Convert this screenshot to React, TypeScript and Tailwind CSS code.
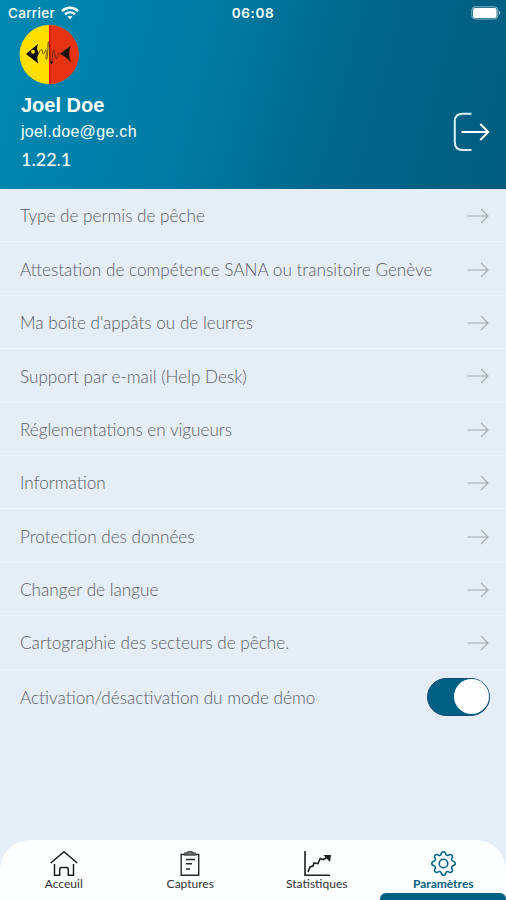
import React from "react";
import { BsGear } from "react-icons/bs";

const settings = [
  { label: "Type de permis de pêche" },
  { label: "Attestation de compétence SANA ou transitoire Genève" },
  { label: "Ma boîte d'appâts ou de leurres" },
  { label: "Support par e-mail (Help Desk)" },
  { label: "Réglementations en vigueurs" },
  { label: "Information" },
  { label: "Protection des données" },
  { label: "Changer de langue" },
  { label: "Cartographie des secteurs de pêche." },
];

const WifiIcon = () => (
  <svg width="18" height="14" viewBox="0 0 18 14" fill="none">
    <path d="M1 5.1C5.5 .7 12.5 .7 17 5.1" stroke="white" strokeWidth="2.5" />
    <path d="M4 8.3c2.9-2.7 7.1-2.7 10 0" stroke="white" strokeWidth="2.3" />
    <path d="M6.6 10.8c1.4-1.3 3.4-1.3 4.8 0L9 13.3z" fill="white" />
  </svg>
);

const BatteryIcon = () => (
  <svg width="31" height="14" viewBox="0 0 31 14" fill="none">
    <rect x=".8" y=".8" width="26" height="12.2" rx="3.4" stroke="#8fb8c9" strokeWidth="1" />
    <rect x="2" y="2" width="23.6" height="10" rx="2" fill="white" />
    <path d="M28 4.8c2 .8 2 3.4 0 4.2z" fill="#8fb8c9" />
  </svg>
);

const FishLogo = () => (
  <svg width="60" height="60" viewBox="0 0 60 60" fill="none">
    <circle cx="30" cy="29.5" r="29.4" fill="#ffdf00" />
    <path d="M30.5.1a29.4 29.4 0 0 1 0 58.8z" fill="#e63312" />
    <path d="M30.7.2v58.6" stroke="#e20613" strokeWidth="1.5" />
    <path d="M7 29 19 19c-1.3 4-1.1 6 .8 9-1.8 3.5-1.8 6-.5 10.5z" fill="#080808" />
    <circle cx="14" cy="26.7" r="2" fill="#ffdf00" />
    <path
      d="M18 30c2-.3 2.4-4.5 4-5.5 1.8-.3 1.2 3.8 2.2 4.5 1.5.2 1.7-4.7 3-3.5.8 1.8-1 8.4.3 9 1.7-.6 1-18.8 2-17.7 1.5 2.2.6 20.8 2.7 21.7 1.5-.5.7-11.6 2.3-13.5 1.5-.2 1.3 9.5 2.7 9 1.4-.8 1.4-5.9 3.2-6.3 1.1.3 1.3 2 2.6 2.3"
      stroke="#4a2a10"
      strokeWidth=".75"
    />
    <path d="M30.8 36.5h3.2l-1.5 3z" fill="#17130d" />
    <path d="m41 28.8 11-8c-2.5 5-2.4 10.5.3 16.7l-5.9-5.6z" fill="#17130d" />
  </svg>
);

const LogoutIcon = () => (
  <svg width="38" height="42" viewBox="0 0 38 42" fill="none" stroke="white" strokeWidth="2">
    <path d="M19.5 2.8h-9Q2.8 2.8 2.8 10.5V31q0 8 7.7 8h9" stroke="#dceff6" />
    <path d="M9.5 21h27M28.3 13l8 8-8 8" strokeWidth="2" />
  </svg>
);

const ArrowIcon = () => (
  <svg width="22" height="16" viewBox="0 0 22 16" fill="none" stroke="#a3a8ad" strokeWidth="1.1">
    <path d="M.5 8h20.5M14 .8 21 8l-7 7.2" />
  </svg>
);

const HomeIcon = () => (
  <svg width="28" height="28" viewBox="0 0 28 28" fill="none" stroke="#1d1f20" strokeWidth="1.5">
    <path d="m.8 13 13.2-11.3L27.2 13" />
    <path d="M4.5 14v11.2h5.2V19q0-1.5 1.5-1.5h5.6q1.5 0 1.5 1.5v6.2h5.2V14" />
  </svg>
);

const ClipboardIcon = () => (
  <svg width="28" height="28" viewBox="0 0 28 28" fill="none" stroke="#252829" strokeWidth="1.4">
    <path d="M9 4.5H5.2v20.7h17.5V4.5H19" />
    <path d="M9 5V3h2.2l1-1.4h3.6l1 1.4H19v2z" fill="#777b7c" stroke="#4b4e50" />
    <path d="M10 9.5h9M10 13.7h6M10 19h4" strokeWidth="1.5" />
  </svg>
);

const ChartIcon = () => (
  <svg width="28" height="28" viewBox="0 0 28 28" fill="none" stroke="#1d1f20" strokeWidth="1.6">
    <path d="M2 1v24.2h25" />
    <path d="m5 22 2-5 3-1 1-3 4 .7 2.2-5.2 3.3 1L25 6.5" />
    <path d="M20.5 5h7.5l-1 7z" fill="#1d1f20" stroke="none" />
  </svg>
);

const tabs = [
  { label: "Acceuil", icon: <HomeIcon /> },
  { label: "Captures", icon: <ClipboardIcon /> },
  { label: "Statistiques", icon: <ChartIcon /> },
  { label: "Paramètres", icon: <BsGear size={25} />, active: true },
];

const App: React.FC = () => {
  return (
    <div className="w-[506px] h-[900px] flex flex-col overflow-hidden bg-[#e5edf6] font-['Lato',sans-serif]">
      <header className="h-[189px] shrink-0 bg-[linear-gradient(105deg,#0089b1_0%,#007ba3_38%,#00668a_68%,#005c7f_100%)] text-white">
        <div className="h-[25px] pt-px px-[8px] grid grid-cols-3 items-center font-['Inter',sans-serif]">
          <div className="flex items-center gap-[6px]">
            <span className="text-[13.5px] font-medium tracking-[0.3px]">Carrier</span>
            <WifiIcon />
          </div>
          <span className="text-[13.5px] font-semibold tracking-[0.6px] text-center">06:08</span>
          <div className="flex justify-end -mr-[4px]">
            <BatteryIcon />
          </div>
        </div>
        <div className="pl-[19px]">
          <FishLogo />
        </div>
        <div className="flex justify-between pl-[21px] pr-[16px]">
          <div className="pt-[8px]">
            <h1 className="text-[20px] leading-[24px] font-bold font-['Liberation_Sans',sans-serif]">Joel Doe</h1>
            <p className="mt-[3px] text-[16px] leading-[24px] tracking-[0.32px] font-['Liberation_Sans',sans-serif]">
              joel.doe@ge.ch
            </p>
            <p className="mt-[3px] text-[18px] leading-[24px]">1.22.1</p>
          </div>
          <div className="mt-[26px]">
            <LogoutIcon />
          </div>
        </div>
      </header>

      <main className="flex-1">
        {settings.map((item) => (
          <div
            key={item.label}
            className="h-[53.4px] pt-[2px] border-b border-[#eff4fb] pl-5 pr-[17px] flex items-center justify-between">
            <span className="text-[17.15px] font-light text-[#5a6065] whitespace-nowrap">{item.label}</span>
            <ArrowIcon />
          </div>
        ))}
        <div className="h-[54px] pl-5 pr-[16px] flex items-center justify-between">
          <span className="pt-[2px] text-[17.15px] font-light text-[#5a6065]">Activation/désactivation du mode démo</span>
          <div className="w-[63px] h-[38px] rounded-full bg-[#006084] border border-[#174c79] flex items-center justify-end">
            <div className="w-[35px] h-[35px] rounded-full bg-white" />
          </div>
        </div>
      </main>

      <nav className="relative h-[60px] shrink-0 bg-[#fdfefe] rounded-t-[30px] grid grid-cols-4">
        {tabs.map((tab) => (
          <div
            key={tab.label}
            className={`flex flex-col items-center pt-[10px] pl-px ${tab.active ? "text-[#006084]" : "text-[#2f3335]"}`}>
            <div className="h-[27px] flex items-center justify-center">{tab.icon}</div>
            <span className={`text-[12px] leading-[14px] ${tab.active ? "font-bold" : ""}`}>{tab.label}</span>
          </div>
        ))}
        <div className="absolute bottom-0 right-0 w-[126px] h-[7px] rounded-t-[6px] bg-[#006084]" />
      </nav>
    </div>
  );
};

export default App;
